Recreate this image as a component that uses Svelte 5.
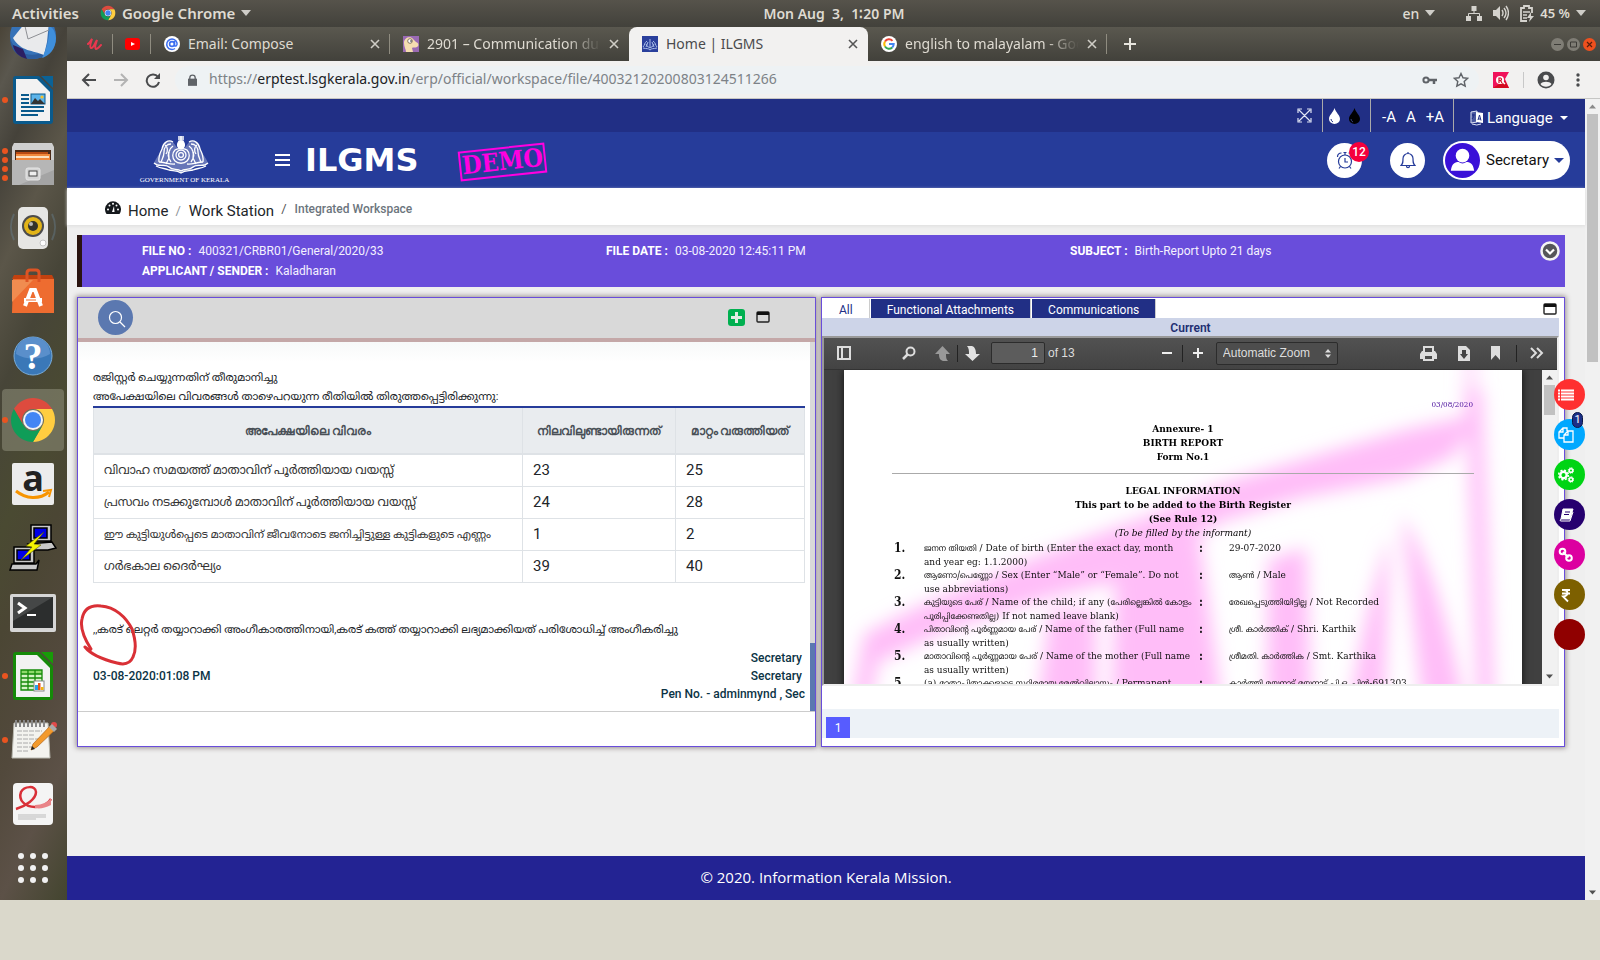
<script>
  const pinned = ['udemy', 'youtube'];
  const tabs = [
    { icon: 'mail', title: 'Email: Compose', active: false },
    { icon: 'lama', title: '2901 – Communication du', active: false, fade: true },
    { icon: 'kerala', title: 'Home | ILGMS', active: true },
    { icon: 'google', title: 'english to malayalam - Goo', active: false, fade: true }
  ];
  const dock = [
    { id: 'thunderbird', dots: 0 },
    { id: 'writer', dots: 1 },
    { id: 'files', dots: 4 },
    { id: 'speaker', dots: 0 },
    { id: 'software', dots: 0 },
    { id: 'help', dots: 0 },
    { id: 'chrome', dots: 1, active: true },
    { id: 'amazon', dots: 0 },
    { id: 'putty', dots: 0 },
    { id: 'terminal', dots: 0 },
    { id: 'calc', dots: 1 },
    { id: 'notes', dots: 1 },
    { id: 'pdf', dots: 0 },
    { id: 'grid', dots: 0 }
  ];
  const changes = [
    ['വിവാഹ സമയത്ത് മാതാവിന് പൂർത്തിയായ വയസ്സ്', 23, 25],
    ['പ്രസവം നടക്കുമ്പോൾ മാതാവിന് പൂർത്തിയായ വയസ്സ്', 24, 28],
    ['ഈ കുട്ടിയുൾപ്പെടെ മാതാവിന് ജീവനോടെ ജനിച്ചിട്ടുള്ള കുട്ടികളുടെ എണ്ണം', 1, 2],
    ['ഗർഭകാല ദൈർഘ്യം', 39, 40]
  ];
  const items = [
    { n: '1.', ml: 'ജനന തിയതി', en: ' / Date of birth (Enter the exact day, month', rest: 'and year eg: 1.1.2000)', vml: '', v: '29-07-2020' },
    { n: '2.', ml: 'ആണോ/പെണ്ണോ', en: ' / Sex (Enter “Male” or “Female”. Do not', rest: 'use abbreviations)', vml: 'ആൺ', v: ' / Male' },
    { n: '3.', ml: 'കുട്ടിയുടെ പേര്', en: ' / Name of the child; if any (', ml2: 'പേരില്ലെങ്കിൽ കോളം', ml3: 'പൂരിപ്പിക്കേണ്ടതില്ല', rest: ') If not named leave blank)', vml: 'രേഖപ്പെടുത്തിയിട്ടില്ല', v: ' / Not Recorded' },
    { n: '4.', ml: 'പിതാവിന്റെ പൂർണ്ണമായ പേര്', en: ' / Name of the father (Full name', rest: 'as usually written)', vml: 'ശ്രീ. കാർത്തിക്', v: ' / Shri. Karthik' },
    { n: '5.', ml: 'മാതാവിന്റെ പൂർണ്ണമായ പേര്', en: ' / Name of the mother (Full name', rest: 'as usually written)', vml: 'ശ്രീമതി. കാർത്തിക', v: ' / Smt. Karthika' },
    { n: '5.', pre: '(a) ', ml: 'മാതാപിതാക്കളുടെ സ്ഥിരമായ മേൽവിലാസം', en: ' / Permanent', rest: '', vml: 'കാർത്തി മയ്യനാട് മയ്യനാട് പി.ഒ, പിൻ', v: '-691303' }
  ];
  const floats = [
    { id: 'list', color: '#ff3030' },
    { id: 'copy', color: '#00a8ff', badge: 1 },
    { id: 'gears', color: '#00d414' },
    { id: 'book', color: '#26006f' },
    { id: 'link', color: '#dc00a0' },
    { id: 'rupee', color: '#7d6000' },
    { id: 'blank', color: '#900000' }
  ];
</script>

{#snippet chromeLogo()}
  <path fill="#dd4b3e" d="M24 13H43.05A22 22 0 0 0 4.95 13L14.47 29.5A11 11 0 0 1 24 13z" />
  <path fill="#ffcd40" d="M43.05 13A22 22 0 0 1 24 46L33.53 29.5A11 11 0 0 0 24 13z" />
  <path fill="#0f9d58" d="M24 46A22 22 0 0 1 4.95 13L14.47 29.5A11 11 0 0 0 33.53 29.5z" />
  <circle cx="24" cy="24" r="10" fill="#f4f4f4" />
  <circle cx="24" cy="24" r="8" fill="#4285f4" />
{/snippet}

{#snippet emblem()}
  <path d="M20 7c-5-3-10 1-11 7-2 4-6 9-8 14 5 5 11 2 15 5s8 2 12 5c4-3 8-2 12-5s10 0 15-5c-2-5-6-10-8-14-1-6-6-10-11-7l-5 7h-6z" fill="#fff" opacity=".3" />
  <g fill="none" stroke="#fff" stroke-width="1.3">
    <path d="M28 1v5M25 2h6M25 4h6M26 6c-2 3-2 5 0 7h4c2-2 2-4 0-7z" fill="#fff" />
    <circle cx="28" cy="20" r="5" /><circle cx="28" cy="20" r="2.4" />
    <path d="M22 15c-3 3-3 8 0 11 3 3 9 3 12 0 3-3 3-8 0-11-3-2-9-2-12 0z" />
    <path d="M20 7c-5-3-10 1-11 7-2 4-4 8-3 13M18 9c-4 0-7 3-7 8s-2 7-3 10M20 11c-4 3-5 7-4 12l-3 6M17 15c-3 3-2 8 1 12M12 10c3 2 3 6 1 9" />
    <path d="M36 7c5-3 10 1 11 7 2 4 4 8 3 13M38 9c4 0 7 3 7 8s2 7 3 10M36 11c4 3 5 7 4 12l3 6M39 15c3 3 2 8-1 12M44 10c-3 2-3 6-1 9" />
    <path d="M1 28c5 5 11 0 15 4s8 1 12 4c4-3 8 0 12-4s10 1 15-4M3 31c6 3 9 2 13 4 4 1 8 0 12 3 4-3 8-2 12-3 4-2 7-1 13-4M6 27c6 0 11 3 16 2M50 27c-6 0-11 3-16 2" />
  </g>
{/snippet}

{#snippet closeX(color)}
  <svg width="10" height="10" viewBox="0 0 10 10" aria-hidden="true"><path d="M1 1l8 8M9 1L1 9" stroke={color} stroke-width="1.6" /></svg>
{/snippet}

{#snippet favicon(id)}
  <svg width="16" height="16" viewBox="0 0 16 16" aria-hidden="true">
    {#if id === 'udemy'}
      <path d="M2 8c2-1 3-4 4-5-1 3-3 8-1 9s4-5 6-8c-1 3-3 8-1 9 2 0 4-3 5-4" fill="none" stroke="#e8384f" stroke-width="2" stroke-linecap="round" />
    {:else if id === 'youtube'}
      <rect x="1" y="2" width="15" height="12" rx="3" fill="#f00" /><path d="M7 6l4 2-4 2z" fill="#fff" />
    {:else if id === 'mail'}
      <circle cx="8" cy="8" r="8" fill="#fff" /><circle cx="8" cy="8" r="2.4" fill="none" stroke="#3c6ef0" stroke-width="1.6" />
      <path d="M10.500 5v4.500c1 1.500 3 0 2.500-2.500A5.200 5.200 0 1 0 11 12.500" fill="none" stroke="#3c6ef0" stroke-width="1.500" />
    {:else if id === 'lama'}
      <rect width="16" height="16" fill="#9a6ab4" /><path d="M3 16c0-3-2-5-2-9 0-6 7-7 9-4l3 3c3 1 3 4 1 5-2 1-4 0-5 1l1 4z" fill="#f5ddb0" /><circle cx="7" cy="5" r="2.300" fill="#fff" stroke="#5a4636" stroke-width=".7" /><circle cx="8" cy="5" r=".8" fill="#222" />
    {:else if id === 'kerala'}
      <rect width="16" height="16" fill="#2a3f9c" /><path d="M8 3v9M5 5c-3 2-2 4-4 6M11 5c3 2 2 4 4 6M4 8c1 3 3 3 4 4 1-1 3-1 4-4M1 12c4 1 5 0 7 2 2-2 3-1 7-2M6 6l-2 5M10 6l2 5" fill="none" stroke="#a9bee8" stroke-width="1" />
    {:else}
      <circle cx="8" cy="8" r="8" fill="#fff" />
      <g fill="none" stroke-width="2"><path d="M11.500 4.800A4.700 4.700 0 0 0 4 5.500" stroke="#ea4335" /><path d="M4 5.500a4.700 4.700 0 0 0 0 5" stroke="#fbbc05" /><path d="M4 10.500a4.700 4.700 0 0 0 7.200.900" stroke="#34a853" /><path d="M8 8h4.700c0 1.500-.5 2.500-1.500 3.400" stroke="#4285f4" /></g>
    {/if}
  </svg>
{/snippet}

{#snippet dockIcon(id)}
  <svg width="48" height="48" viewBox="0 0 48 48" aria-hidden="true">
    {#if id === 'thunderbird'}
      <circle cx="24" cy="24" r="23" fill="#3572b8" /><path d="M1 26c0 12 9 21 22 21 14 0 24-9 24-22-3 8-8 11-12 15C22 46 6 42 1 26z" fill="#2b5d9f" />
      <path d="M4 33l10 4 4 10C10 45 5 40 4 33z" fill="#2b1f63" />
      <path d="M4 26L20 6l20 4-2 20-3 13C24 38 12 40 4 26z" fill="#e9eaec" /><path d="M15 10l4 17 21-9" fill="none" stroke="#8d8f94" />
      <path d="M33 46c7-2 14-9 14-20-1-8-4-11-7-12 1 8-1 20-7 32z" fill="#3f8fdc" />
    {:else if id === 'writer' || id === 'calc'}
      <path d="M7 0h23l14 14v31a3 3 0 0 1-3 3H7a3 3 0 0 1-3-3V3a3 3 0 0 1 3-3z" fill={id === 'writer' ? '#0a5a8c' : '#158a08'} />
      <path d="M7 3h21l13 13v29H7z" fill="#f2f2f2" /><path d="M32 0h12v12z" fill={id === 'writer' ? '#0b6296' : '#189b08'} />
      {#if id === 'writer'}
        <g stroke="#0a5a8c" stroke-width="2"><path d="M12 19h8M12 23h8M12 27h8M12 31h23M12 35h23M12 39h17" /></g>
        <rect x="22" y="18" width="14" height="10" fill="#5cb4ea" stroke="#0a5a8c" /><path d="M22 28l4-6 3 3 2-2 5 5z" fill="#333" /><circle cx="33" cy="21" r="1.600" fill="#f5c02c" />
      {:else}
        <rect x="12" y="18" width="21" height="20" fill="#d8f3c8" /><path d="M12 18h21v4H12z" fill="#8fd96c" />
        <path d="M12 18h21v20H12zM12 22h21M12 26h21M12 30h21M12 34h21M19 18v20M26 18v20" fill="none" stroke="#158a08" stroke-width="1.300" />
        <rect x="25" y="29" width="10" height="10" fill="#fff" stroke="#888" /><path d="M26 33h3v5h-3z" fill="#2a9fe8" /><path d="M29 31h2.500v7H29z" fill="#e8541c" /><path d="M32 35h2.500v3H32z" fill="#f3b40c" />
      {/if}
    {:else if id === 'files'}
      <path d="M5 3h38l2 4v16H3V7z" fill="#cfcfcf" /><path d="M6 10h36v13H6z" fill="#4a2a18" /><path d="M7 12h32v9H7z" fill="#b84a12" /><path d="M7 14h34v7H7z" fill="#f0883c" /><path d="M7 16h33v2H7z" fill="#fbe0c0" />
      <path d="M3 20h42v25H3z" fill="#a4a4a4" /><path d="M3 20h42v10L10 45H3z" fill="#b6b6b6" /><rect x="17" y="28" width="14" height="12" rx="2" fill="#d4d4d4" stroke="#e6e6e6" /><rect x="20" y="31" width="8" height="5" fill="#eee" stroke="#444" />
    {:else if id === 'speaker'}
      <path d="M5 10c-4 8-4 18 0 26M43 10c4 8 4 18 0 26" fill="none" stroke="#6d8ba3" stroke-width="2" opacity=".35" />
      <rect x="9" y="3" width="30" height="42" rx="5" fill="#e6e6e4" /><circle cx="24" cy="22" r="11" fill="#4c4c4c" /><circle cx="24" cy="22" r="9" fill="#e2b418" /><circle cx="24" cy="22" r="5" fill="#33322a" /><circle cx="22" cy="20" r="2" fill="#b9b9b9" /><circle cx="34" cy="39" r="3" fill="#fff" stroke="#c4c4c4" />
    {:else if id === 'software'}
      <path d="M4 11h41v34H3z" fill="#ee6c30" /><path d="M3 11l2-4h38l2 4z" fill="#c2410f" /><path d="M3 12h21L3 34z" fill="#f08c50" /><path d="M18 14V5q0-3 3-3h6q3 0 3 3v9" fill="none" stroke="#dd5424" stroke-width="3" />
      <path d="M16 38l6-16h4l6 16" fill="none" stroke="#fff" stroke-width="4" /><path d="M15 32h18" stroke="#fff" stroke-width="4" /><path d="M17 32h10" stroke="#ee6c30" />
    {:else if id === 'help'}
      <circle cx="24" cy="24" r="19" fill="#3a78b8" stroke="#7aaedb" /><path d="M7 22a17 17 0 0 1 34 0c-10 6-24 6-34 0z" fill="#5a8fcb" /><text x="24" y="37" text-anchor="middle" font-family="Liberation Serif" font-weight="700" font-size="38" fill="#fff">?</text>
    {:else if id === 'chrome'}
      {@render chromeLogo()}
    {:else if id === 'amazon'}
      <rect x="3" y="3" width="42" height="42" rx="2" fill="#ececec" /><text x="24" y="31" text-anchor="middle" font-family="Open Sans" font-weight="700" font-size="36" fill="#222">a</text>
      <path d="M7 31c10 8 23 9 33 1" fill="none" stroke="#f79400" stroke-width="3" /><path d="M34 31l8-1-2 7" fill="none" stroke="#f79400" stroke-width="2" />
    {:else if id === 'putty'}
      <g stroke="#000" stroke-width="1.500"><path d="M22 1h20v16H22zM19 20l24-2 4 6-8 2H24z" fill="#c8c8c8" /><path d="M25 4h13v10H25z" fill="#0000e8" /><path d="M5 23h20v16H5zM3 40h24l3-4-2 10H1z" fill="#c8c8c8" /><path d="M8 26h13v10H8z" fill="#0000e8" /></g>
      <path d="M35 8L17 22l6 1-11 13 20-15-7-1z" fill="#f4f400" stroke="#555500" stroke-width=".6" />
    {:else if id === 'terminal'}
      <rect x="1" y="6" width="46" height="38" rx="2" fill="#d6d6d6" /><rect x="4" y="9" width="40" height="31" fill="#2c2e2e" /><path d="M4 9h40L4 33z" fill="#454747" /><path d="M9 15l7 5-7 5" fill="none" stroke="#fff" stroke-width="3" /><path d="M18 27h9" stroke="#fff" stroke-width="2" />
    {:else if id === 'notes'}
      <path d="M5 7h34l2 35H3z" fill="#f3f3ef" stroke="#b9b9b0" /><path d="M7 4v7M11 4v7M15 4v7M19 4v7M23 4v7M27 4v7M31 4v7M35 4v7" stroke="#888" stroke-width="2" /><path d="M8 15h25M8 19h18M8 23h23M8 27h14M8 31h18M8 35h12" stroke="#aaa" stroke-dasharray="5 1" />
      <path d="M22 34l2-6L42 9l5 4-19 18z" fill="#f39a2c" stroke="#b2651a" stroke-width=".7" /><path d="M22 34l1-4 3 3z" fill="#222" /><circle cx="45" cy="9" r="3" fill="#e24a4a" /><path d="M40 11l3-3 5 5-3 3z" fill="#aaa" />
    {:else if id === 'pdf'}
      <rect x="4" y="3" width="40" height="42" rx="4" fill="#f4f4f4" /><path d="M7 29c10-3 20-10 20-17 0-7-12-6-15 0-3 8 4 15 14 15 7 0 13-3 16-8" fill="none" stroke="#d93038" stroke-width="2.500" /><path d="M26 25c7 0 13-3 16-7v7c-6 3-11 4-16 3z" fill="#e98488" /><path d="M9 35h28M9 37h28M9 39h18" stroke="#bbb" />
    {:else}
      {#each [12, 24, 36] as y}{#each [12, 24, 36] as x}<circle cx={x} cy={y} r="3" fill="#f1f1f1" />{/each}{/each}
    {/if}
  </svg>
{/snippet}

{#snippet windowIcon()}
  <svg width="14" height="12" viewBox="0 0 14 12" aria-hidden="true"><rect x="1" y="1" width="12" height="10" rx="1" fill="none" stroke="#222" stroke-width="1.400" /><path d="M1 1h12v3H1z" fill="#111" /></svg>
{/snippet}

{#snippet caret(color)}
  <svg width="10" height="6" viewBox="0 0 10 6" aria-hidden="true"><path d="M0 0h10L5 6z" fill={color} /></svg>
{/snippet}

{#snippet arrow(dir, color)}
  <svg width="15" height="15" viewBox="0 0 15 15" aria-hidden="true"><path d={dir === 'up' ? 'M4 9.500h7l-3.500-4z' : 'M4 5.500h7l-3.500 4z'} fill={color} /></svg>
{/snippet}

<div class="desktop">
  <header class="topbar">
    <div class="top-left">
      <button class="plain">Activities</button>
      <button class="plain app">
        <svg width="16" height="16" viewBox="0 0 48 48" aria-hidden="true">{@render chromeLogo()}</svg>
        Google Chrome {@render caret('#cfcdc8')}
      </button>
    </div>
    <div class="clock">Mon Aug&nbsp; 3,&nbsp; 1∶20 PM</div>
    <div class="top-right">
      <button class="plain lang">en {@render caret('#cfcdc8')}</button>
      <svg width="16" height="16" viewBox="0 0 16 16" aria-hidden="true"><path d="M5.500 1h5v5h-5zM0 11h5v5H0zM11 11h5v5h-5z" fill="#d5d3ce" /><path d="M8 5v4M2.500 11V8.500h11V11" fill="none" stroke="#d5d3ce" /></svg>
      <svg width="16" height="16" viewBox="0 0 16 16" aria-hidden="true"><path d="M0 5h3l4-4v14l-4-4H0z" fill="#d5d3ce" /><path d="M9 5q2 3 0 6M11 3q4 5 0 10M13 1q5 7 0 14" fill="none" stroke="#d5d3ce" stroke-width="1.400" /></svg>
      <button class="plain battery">
        <svg width="14" height="17" viewBox="0 0 14 17" aria-hidden="true"><path d="M7 16H1V3h3V1h5v2h3v5" fill="none" stroke="#d5d3ce" stroke-width="1.800" /><path d="M3 7h7M3 10h4M3 13h4" stroke="#d5d3ce" stroke-width="1.400" /><path d="M11 7l-4 6h3l-1 4 5-6h-3z" fill="#d5d3ce" /></svg>
        45 % {@render caret('#cfcdc8')}
      </button>
    </div>
  </header>

  <div class="body">
    <nav class="dock" aria-label="Dock">
      {#each dock as d, i}
        <button class="slot" class:first={i === 0} class:focused={d.active} aria-label={d.id}>
          <span class="dots">{#each Array(d.dots) as _}<i></i>{/each}</span>
          {@render dockIcon(d.id)}
        </button>
      {/each}
    </nav>

    <div class="window">
      <div class="tabstrip">
        {#each pinned as p}
          <button class="tab pin" aria-label={p}>{@render favicon(p)}</button>
        {/each}
        {#each tabs as t}
          <div class="tab" class:active={t.active}>
            {@render favicon(t.icon)}
            <span class="title" class:fade={t.fade}>{t.title}</span>
            <button class="plain" aria-label="Close tab">{@render closeX(t.active ? '#555' : '#cfcdc6')}</button>
          </div>
        {/each}
        <button class="plain newtab" aria-label="New tab"><svg width="14" height="14" viewBox="0 0 14 14"><path d="M7 1v12M1 7h12" stroke="#e6e4dd" stroke-width="2" /></svg></button>
        <div class="winbtns">
          <svg width="13" height="13" viewBox="0 0 13 13"><circle cx="6.500" cy="6.500" r="6.500" fill="#7f7d75" /><path d="M3 6.500h7" stroke="#3c3b37" /></svg>
          <svg width="13" height="13" viewBox="0 0 13 13"><circle cx="6.500" cy="6.500" r="6.500" fill="#7f7d75" /><path d="M3.500 4h6v5h-6z" fill="none" stroke="#3c3b37" /></svg>
          <svg width="13" height="13" viewBox="0 0 13 13"><circle cx="6.500" cy="6.500" r="6.500" fill="#f0501e" /><path d="M4 4l5 5M9 4L4 9" stroke="#5a1e0c" stroke-width="1.200" /></svg>
        </div>
      </div>

      <div class="toolbar">
        <button class="plain" aria-label="Back"><svg width="16" height="16" viewBox="0 0 16 16"><path d="M15 8H2M8 2L2 8l6 6" fill="none" stroke="#4a4b4d" stroke-width="2" /></svg></button>
        <button class="plain" aria-label="Forward"><svg width="16" height="16" viewBox="0 0 16 16"><path d="M1 8h13M8 2l6 6-6 6" fill="none" stroke="#b3b3b3" stroke-width="2" /></svg></button>
        <button class="plain" aria-label="Reload"><svg width="16" height="16" viewBox="0 0 16 16"><path d="M13 5a6.200 6.200 0 1 0 1 5" fill="none" stroke="#4a4b4d" stroke-width="2" /><path d="M15 1v6H9z" fill="#4a4b4d" /></svg></button>
        <div class="omnibox">
          <svg width="9" height="12" viewBox="0 0 10 13" aria-hidden="true"><path d="M0 5h10v8H0z" fill="#5f6368" /><path d="M2 6V4a3 3 0 0 1 6 0v2" fill="none" stroke="#5f6368" stroke-width="1.500" /></svg>
          <span class="url">https://<b>erptest.lsgkerala.gov.in</b>/erp/official/workspace/file/40032120200803124511266</span>
          <svg width="15" height="10" viewBox="0 0 15 10" aria-hidden="true"><circle cx="4" cy="5" r="2.600" fill="none" stroke="#5f6368" stroke-width="2" /><path d="M7 5h8M12 5v4" stroke="#5f6368" stroke-width="2.500" /></svg>
          <svg width="16" height="16" viewBox="0 0 16 16" aria-hidden="true"><path d="M8 1.500l2 4.300 4.600.500-3.400 3.200 1 4.700L8 11.800l-4.200 2.400 1-4.700L1.400 6.300 6 5.800z" fill="none" stroke="#5f6368" stroke-width="1.400" /></svg>
        </div>
        <svg width="16" height="16" viewBox="0 0 16 16" aria-hidden="true"><path d="M0 0h16l-4 7 4 9H0z" fill="#f0125a" /><path d="M0 16l9-6 3-1 4 7z" fill="#d40a20" /><circle cx="7" cy="8" r="4" fill="#fff" /><path d="M9 9l3 3" stroke="#fff" stroke-width="1.500" /><path d="M6 11V6h1.500a1.300 1.300 0 0 1 0 2.500H6M7.500 8.500L9 11" fill="none" stroke="#d40a20" stroke-width="1.200" /></svg>
        <span class="vline"></span>
        <svg width="18" height="18" viewBox="0 0 18 18" aria-hidden="true"><circle cx="9" cy="9" r="8.500" fill="#4a4b4d" /><circle cx="9" cy="6.500" r="2.800" fill="#f2f1f0" /><path d="M3.500 13c2-3 9-3 11 0-2 3.500-9 3.500-11 0z" fill="#f2f1f0" /></svg>
        <button class="plain kebab" aria-label="Menu"><svg width="4" height="16" viewBox="0 0 4 16"><g fill="#4a4b4d"><circle cx="2" cy="3" r="1.700" /><circle cx="2" cy="8" r="1.700" /><circle cx="2" cy="13" r="1.700" /></g></svg></button>
      </div>

      <div class="viewport">
        <div class="page">
          <div class="utility">
            <button class="plain full" aria-label="Full screen"><svg width="15" height="15" viewBox="0 0 15 15"><path d="M2 2l11 11M13 2L2 13M1 5V1h4M10 1h4v4M14 10v4h-4M5 14H1v-4" fill="none" stroke="#dfe4f4" stroke-width="1.200" /></svg></button>
            <div class="ucell drops">
              <svg width="11" height="16" viewBox="0 0 11 16"><path d="M5.500 0C7 5 11 7 11 11a5.500 5 0 0 1-11 0C0 7 4 5 5.500 0z" fill="#fff" /><path d="M2 11q0 2 2 3" fill="none" stroke="#212f85" /></svg>
              <svg width="11" height="16" viewBox="0 0 11 16"><path d="M5.500 0C7 5 11 7 11 11a5.500 5 0 0 1-11 0C0 7 4 5 5.500 0z" fill="#000" /><path d="M2 11q0 2 2 3" fill="none" stroke="#39427a" /></svg>
            </div>
            <div class="ucell sizes"><button class="plain">-A</button><button class="plain">A</button><button class="plain">+A</button></div>
            <button class="plain ucell language">
              <svg width="14" height="16" viewBox="0 0 14 16" aria-hidden="true"><path d="M1 2l6-1v11l-6 1z" fill="#4a589f" stroke="#dfe4f4" /><path d="M6 2l7 1v10l-7-1z" fill="#fff" /><path d="M8 10l1.500-5L11 10.500M8.500 9h2M2 5h3M3 4q1 4-1 5" fill="none" stroke="#212f85" /><path d="M2 14q5 2 9 0" fill="none" stroke="#dfe4f4" /></svg>
              Language <svg class="lc" width="8" height="4" viewBox="0 0 8 4"><path d="M0 0h8L4 4z" fill="#fff" /></svg>
            </button>
          </div>

          <div class="masthead">
            <div class="crest">
              <svg width="56" height="40" viewBox="0 0 56 40" aria-hidden="true">{@render emblem()}</svg>
              <span>GOVERNMENT OF KERALA</span>
            </div>
            <button class="plain burger" aria-label="Toggle menu"><svg width="15" height="12" viewBox="0 0 15 12"><path d="M0 1h15M0 6h15M0 11h15" stroke="#fff" stroke-width="2" /></svg></button>
            <span class="brand">ILGMS</span>
            <span class="demo">DEMO</span>
            <div class="mast-right">
              <button class="round" aria-label="Alarms">
                <svg width="18" height="19" viewBox="0 0 18 19"><g fill="none" stroke="#263c9a" stroke-width="1.200"><circle cx="9" cy="10.500" r="6.500" /><path d="M9 7v4h3M9 4V2M7.500 1.500h3M4.500 15.500L3 17.500M13.500 15.500l1.500 2M1.500 6q0-4 4-4M16.500 6q0-4-4-4" /></g></svg>
                <span class="badge">12</span>
              </button>
              <button class="round" aria-label="Notifications">
                <svg width="16" height="18" viewBox="0 0 16 18"><path d="M1 14.500c2-2 2-3 2-7a5 5 0 0 1 10 0c0 4 0 5 2 7zM8 2.500V1M6.500 15a1.500 1.700 0 0 0 3 0" fill="none" stroke="#263c9a" stroke-width="1.200" /></svg>
              </button>
              <button class="user">
                <svg width="35" height="35" viewBox="0 0 36 36" aria-hidden="true"><circle cx="18" cy="18" r="18" fill="#3a10d8" /><circle cx="18" cy="13" r="7" fill="#fff" /><path d="M6 28.500c1-8 5-9 8-9q4 3 8 0c3 0 7 1 8 9z" fill="#fff" /></svg>
                Secretary <svg width="10" height="5" viewBox="0 0 10 5" aria-hidden="true"><path d="M0 0h10L5 5z" fill="#263c9a" /></svg>
              </button>
            </div>
          </div>

          <nav class="crumbs" aria-label="Breadcrumb">
            <svg width="16" height="13" viewBox="0 0 16 13" aria-hidden="true"><path d="M1.500 13A8 8 0 1 1 14.500 13z" fill="#15191d" /><g fill="#fff"><circle cx="3" cy="8.500" r="1" /><circle cx="4.500" cy="4.500" r="1" /><circle cx="8" cy="2.800" r="1" /><circle cx="11.500" cy="4.500" r="1" /><circle cx="13" cy="8.500" r="1" /><path d="M7 11l2-6 .5 6z" /></g></svg>
            <a href="#home">Home</a><span class="sep">/</span><a href="#work">Work Station</a><span class="sep dark">/</span><span class="here">Integrated Workspace</span>
          </nav>

          <main class="content">
            <section class="filebar">
              <dl>
                <div><dt>FILE NO :</dt><dd>400321/CRBR01/General/2020/33</dd></div>
                <div><dt>FILE DATE :</dt><dd>03-08-2020 12:45:11 PM</dd></div>
                <div><dt>SUBJECT :</dt><dd>Birth-Report Upto 21 days</dd></div>
                <div><dt>APPLICANT / SENDER :</dt><dd>Kaladharan</dd></div>
              </dl>
              <button class="plain" aria-label="Expand"><svg width="20" height="20" viewBox="0 0 20 20"><circle cx="10" cy="10" r="8.500" fill="#55555a" stroke="#f4f4f4" stroke-width="2.500" /><path d="M6 8.500l4 4 4-4" fill="none" stroke="#fff" stroke-width="2.200" /></svg></button>
            </section>

            <div class="panels">
              <section class="panel">
                <div class="panel-head">
                  <button class="search" aria-label="Search"><svg width="18" height="18" viewBox="0 0 18 18"><circle cx="7.500" cy="7.500" r="6" fill="none" stroke="#fff" stroke-width="1.200" /><path d="M12 12l5 5" stroke="#fff" stroke-width="1.200" /></svg></button>
                  <div class="head-tools">
                    <button class="plain" aria-label="Add"><svg width="17" height="17" viewBox="0 0 17 17"><rect width="17" height="17" rx="3" fill="#00b050" /><path d="M8.500 3v11M3 8.500h11" stroke="#e4ece4" stroke-width="3" /></svg></button>
                    <button class="plain" aria-label="Maximise">{@render windowIcon()}</button>
                  </div>
                </div>
                <div class="note-wrap">
                  <div class="note">
                    <p class="ml">രജിസ്റ്റർ ചെയ്യുന്നതിന് തീരുമാനിച്ചു<br />അപേക്ഷയിലെ വിവരങ്ങൾ താഴെപറയുന്ന രീതിയിൽ തിരുത്തപ്പെട്ടിരിക്കുന്നു:</p>
                    <table>
                      <colgroup><col /><col class="c2" /><col class="c3" /></colgroup>
                      <thead><tr><th>അപേക്ഷയിലെ വിവരം</th><th>നിലവിലുണ്ടായിരുന്നത്</th><th>മാറ്റം വരുത്തിയത്</th></tr></thead>
                      <tbody>
                        {#each changes as [label, before, after]}
                          <tr><td class="ml" class:long={label.length > 60}>{label}</td><td>{before}</td><td>{after}</td></tr>
                        {/each}
                      </tbody>
                    </table>
                    <div class="remark">
                      <p class="ml">,,കരട് ലെറ്റർ തയ്യാറാക്കി അംഗീകാരത്തിനായി,കരട് കത്ത് തയ്യാറാക്കി ലഭ്യമാക്കിയത് പരിശോധിച്ച് അംഗീകരിച്ചു</p>
                      <svg class="mark" width="62" height="64" viewBox="0 0 62 64" aria-hidden="true"><path d="M12 47C5 36 1 25 3 17 5 6 13 3 22 4c14 1 25 11 31 23 4 12 4 22 1 28-3 7-9 8-16 6-12-3-25-7-32-16l5 4" fill="none" stroke="#d93036" stroke-width="3" stroke-linecap="round" stroke-linejoin="round" /></svg>
                    </div>
                    <div class="sign">
                      <span></span><span class="in">Secretary</span>
                      <span>03-08-2020:01:08 PM</span><span class="in">Secretary</span>
                      <span></span><span>Pen No. - adminmynd , Sec</span>
                    </div>
                  </div>
                  <div class="thinbar"><span></span></div>
                </div>
              </section>

              <section class="panel docs">
                <div class="doc-tabs">
                  <button class="on">All</button><button>Functional Attachments</button><button>Communications</button>
                  <button class="plain max" aria-label="Maximise">{@render windowIcon()}</button>
                </div>
                <div class="caption">Current</div>
                <div class="viewer">
                  <div class="pdfbar">
                    <button class="plain" aria-label="Sidebar"><svg width="14" height="14" viewBox="0 0 14 14"><path d="M1 1h12v12H1zM5 1v12" fill="none" stroke="#ddd" stroke-width="2" /></svg></button>
                    <button class="plain find" aria-label="Find"><svg width="14" height="14" viewBox="0 0 14 14"><circle cx="8.500" cy="5.500" r="4" fill="none" stroke="#ddd" stroke-width="2" /><path d="M5.500 8.500L1 13" stroke="#ddd" stroke-width="2.500" /></svg></button>
                    <button class="plain up" aria-label="Previous page"><svg width="15" height="15" viewBox="0 0 15 15"><path d="M7.500 0L15 8h-4c0 3 0 5 2 7H8c-3-1-4-3-4-7H0z" fill="#999" /></svg></button>
                    <i class="split"></i>
                    <button class="plain down" aria-label="Next page"><svg width="15" height="15" viewBox="0 0 15 15"><path d="M7.500 15L15 8h-4c0-4-1-7-4-8H2c2 2 2 5 2 8H0z" fill="#e2e2e2" /></svg></button>
                    <input type="text" value="1" aria-label="Page" /><span class="of">of 13</span>
                    <span class="grow"></span>
                    <button class="plain" aria-label="Zoom out"><svg width="12" height="12" viewBox="0 0 12 12"><path d="M1 6h10" stroke="#eee" stroke-width="2" /></svg></button>
                    <i class="split zoomsplit"></i>
                    <button class="plain" aria-label="Zoom in"><svg width="12" height="12" viewBox="0 0 12 12"><path d="M1 6h10M6 1v10" stroke="#eee" stroke-width="2" /></svg></button>
                    <span class="pick"><select aria-label="Zoom"><option>Automatic Zoom</option></select><svg width="6" height="9" viewBox="0 0 6 9" aria-hidden="true"><path d="M0 3.500L3 0l3 3.500zM0 5.500L3 9l3-3.500z" fill="#ddd" /></svg></span>
                    <span class="grow"></span>
                    <div class="pdf-right">
                      <button class="plain" aria-label="Print"><svg width="17" height="15" viewBox="0 0 17 15"><path d="M3 5V0h11v5h1l2 3v5h-3v2H3v-2H0V8l2-3z" fill="#ddd" /><path d="M5 2h7v4H5zM5 10h7v3H5z" fill="#4b4b4b" /></svg></button>
                      <button class="plain" aria-label="Download"><svg width="12" height="15" viewBox="0 0 12 15"><path d="M0 0h8l4 4v11H0z" fill="#ddd" /><path d="M4 4h4v4h2l-4 5-4-5h2z" fill="#444" /></svg></button>
                      <button class="plain" aria-label="Bookmark"><svg width="9" height="14" viewBox="0 0 9 14"><path d="M0 0h9v14L4.500 9 0 14z" fill="#ddd" /></svg></button>
                      <i class="split"></i>
                      <button class="plain" aria-label="More tools"><svg width="14" height="12" viewBox="0 0 14 12"><path d="M1 1l5 5-5 5M7 1l5 5-5 5" fill="none" stroke="#ddd" stroke-width="2" /></svg></button>
                    </div>
                  </div>
                  <div class="pdfarea">
                    <article class="sheet">
                      <svg class="stamp" viewBox="0 0 678 314" preserveAspectRatio="none" aria-hidden="true">
                        <defs><filter id="soft" x="-10%" y="-10%" width="120%" height="120%"><feGaussianBlur stdDeviation="9" /></filter></defs>
                        <g fill="#ffbdf8" filter="url(#soft)">
                          <path d="M622 20l16 0 12 314h-16z" /><path d="M620-20h14v60h-14z" opacity=".5" />
                          <path d="M634 44L560 60 456 90 376 114 304 146 204 182 71 238 20 264 8 334H26L34 292 100 262 204 228 304 204 376 152 456 128 560 108 610 86z" />
                          <path d="M206 240h46v94h-58z" />
                          <path d="M272 186l84-16 22 164H268z" />
                          <path d="M424 190l38-12 5 156h-44z" />
                          <path d="M546 165q-22 60-40 169h34z" />
                          <path d="M558 145q38 60 62 189h-42z" />
                        </g>
                      </svg>
                      <div class="date">03/08/2020</div>
                      <h2>Annexure- 1<br />BIRTH REPORT<br />Form No.1</h2>
                      <hr />
                      <h3>LEGAL INFORMATION<br />This part to be added to the Birth Register<br />(See Rule 12)<br /><em>(To be filled by the informant)</em></h3>
                      <ol>
                        {#each items as it}
                          <li>
                            <b>{it.n}</b>
                            <span>{it.pre ?? ''}<i class="m">{it.ml}</i>{it.en}<i class="m">{it.ml2 ?? ''}</i><br /><i class="m">{it.ml3 ?? ''}</i>{it.rest}</span>
                            <b class="colon">:</b>
                            <span><i class="m">{it.vml}</i>{it.v}</span>
                          </li>
                        {/each}
                      </ol>
                    </article>
                    <div class="pdfscroll">{@render arrow('up', '#505050')}<span></span>{@render arrow('down', '#505050')}</div>
                  </div>
                </div>
                <div class="pager"><button>1</button></div>
              </section>
            </div>
          </main>

          <footer>© 2020. Information Kerala Mission.</footer>
          <div class="floats">
            {#each floats as f}
              <button aria-label={f.id} style="background:{f.color}">
                <svg width="16" height="16" viewBox="0 0 16 16" fill="none" stroke="#fff">
                  {#if f.id === 'list'}<path d="M0 3.500h2M3 3.500h13M0 6.500h2M3 6.500h13M0 9.500h2M3 9.500h13M0 12.500h2M3 12.500h13" stroke-width="2" />
                  {:else if f.id === 'copy'}<path d="M6 11H1V5l4-4h4v3M5 1v4H1M6 15V8l4-4h5v11zM10 4v4H6" stroke-width="1.300" />
                  {:else if f.id === 'gears'}<circle cx="5.500" cy="8" r="3.200" stroke-width="2.400" /><circle cx="5.500" cy="8" r="4.800" stroke-width="1.600" stroke-dasharray="2 1.770" /><circle cx="13" cy="3.500" r="1.800" stroke-width="1.600" /><circle cx="13" cy="12.500" r="1.800" stroke-width="1.600" /><circle cx="13" cy="3.500" r="2.800" stroke-dasharray="1.200 1" /><circle cx="13" cy="12.500" r="2.800" stroke-dasharray="1.200 1" />
                  {:else if f.id === 'book'}<path d="M5 2h10l-3 10H3z" fill="#fff" /><path d="M3 12q-2 2 0 2h9l3-9" /><path d="M7 5h5M6 7.500h5" stroke="#26006f" />
                  {:else if f.id === 'link'}<circle cx="4.500" cy="4.500" r="2.800" stroke-width="2" /><circle cx="11" cy="11" r="2.800" stroke-width="2" /><path d="M5 5l5.500 5.500" stroke-width="2" />
                  {:else if f.id === 'rupee'}<path d="M4 3h8M4 6.500h8M5 3c6 0 6 6 0 6.500L10 14.500" stroke-width="1.800" />{/if}
                </svg>
                {#if f.badge}<span>{f.badge}</span>{/if}
              </button>
            {/each}
          </div>
        </div>
        <div class="scrollbar">{@render arrow('up', '#8a8a8a')}<span></span>{@render arrow('down', '#505050')}</div>
      </div>
    </div>
  </div>
</div>

<style>
  :global(body) { margin: 0; background: #dad8cb; }
  .desktop, .desktop :is(div, span, button, section, header, nav, dl, dd, dt, table, th, td, footer, input, select, ol, li, article) { box-sizing: border-box; }
  .desktop { display: flex; flex-direction: column; min-height: 100vh; padding-bottom: 60px; background: #dad8cb; font-family: Roboto, "Noto Sans", sans-serif; overflow: hidden; }
  .desktop svg { display: block; flex: none; }
  button { font: inherit; cursor: pointer; }
  .plain { border: 0; padding: 0; background: none; color: inherit; display: flex; align-items: center; }
  .topbar { height: 27px; display: grid; grid-template-columns: 1fr auto 1fr; align-items: center; padding: 0 14px 1px 12px; background: linear-gradient(#56534b, #42413b); color: #dfdbd2; font: 600 14px "Noto Sans", sans-serif; }
  .top-left { display: flex; gap: 21px; font-size: 15px; }
  .app { gap: 6px; }
  .clock { padding-left: 70px; }
  .top-right { display: flex; justify-content: flex-end; align-items: center; gap: 11px; }
  .lang { gap: 6px; margin-right: 20px; font-weight: 500; }
  .battery { gap: 6px; font-size: 13px; }
  .body { flex: 1; display: flex; }
  .dock { width: 67px; flex: none; background: linear-gradient(115deg, #4a4438 0, #5a574e 6%, #45423a 14%, #5b5649 24%, #474538 36%, #4a4a32 50%, #4b4634 60%, #52493c 74%, #5c5147 86%, #43452f 100%); }
  .slot { position: relative; width: 67px; height: 64px; border: 0; padding: 0 0 0 9px; background: none; display: flex; align-items: center; }
  .slot.first { height: 41px; align-items: flex-end; padding-bottom: 8px; overflow: hidden; }
  .slot.focused::before { content: ""; position: absolute; inset: 1px 3px 1px 2px; border-radius: 4px; background: rgba(150, 150, 130, .5); }
  .slot > :global(svg), .dots { position: relative; }
  .dots { width: 0; display: flex; flex-direction: column; gap: 3px; }
  .dots i { width: 6px; height: 6px; margin-left: -7px; border-radius: 50%; background: #e95420; }
  .window { flex: 1; min-width: 0; display: flex; flex-direction: column; }
  .tabstrip { height: 34px; display: flex; align-items: center; padding: 0 4px 0 8px; background: linear-gradient(#5a584f, #42413b); color: #dfdbd2; font: 14px "Noto Sans", sans-serif; }
  .tab { flex: 0 1 239px; height: 34px; display: flex; align-items: center; gap: 8px; padding: 0 10px 0 13px; position: relative; min-width: 0; }
  .tab::after { content: ""; position: absolute; right: 0; top: 7px; width: 1px; height: 20px; background: #8f8c80; }
  .pin { flex: 0 0 38px; border: 0; background: none; padding: 0; justify-content: center; }
  .active { background: #f2f1f0; color: #4a4b4d; border-radius: 8px 8px 0 0; }
  .active::after, .tab:has(+ .active)::after { display: none; }
  .title { flex: 1; min-width: 0; overflow: hidden; white-space: nowrap; padding-bottom: 2px; }
  .fade { mask-image: linear-gradient(90deg, #000 80%, transparent); }
  .newtab { margin-left: 16px; }
  .winbtns { margin-left: auto; display: flex; gap: 3px; }
  .toolbar { height: 38px; display: flex; align-items: center; gap: 16px; padding: 0 20px 0 14px; background: #f2f1f0; border-bottom: 1px solid #c6c6c4; }
  .omnibox { flex: 1; height: 28px; display: flex; align-items: center; gap: 16px; margin: 0 -2px; padding: 0 10px 0 13px; border-radius: 14px; background: #eef2f4; color: #7d8287; font: 14px "Noto Sans", sans-serif; }
  .omnibox .url { flex: 1; margin-left: -4px; white-space: nowrap; padding-bottom: 2px; }
  .url b { font-weight: 400; color: #202124; }
  .vline { width: 1px; height: 16px; margin: 0 -3px 0 -2px; background: #c8c8c8; }
  .kebab { margin-left: 5px; }
  .viewport { flex: 1; display: flex; }
  .page { flex: 1; min-width: 0; display: flex; flex-direction: column; background: #efefef; position: relative; }
  .scrollbar { width: 15px; display: flex; flex-direction: column; background: #f1f1f1; }
  .scrollbar span { flex: 0 0 248px; margin: 0 2px; background: #c1c1c1; }
  .scrollbar :global(svg:last-child), .pdfscroll :global(svg:last-child) { margin-top: auto; }

  .utility { height: 33px; display: flex; justify-content: flex-end; align-items: stretch; background: #212f85; color: #fff; font-size: 15px; }
  .full { margin-right: 10px; }
  .ucell { border-left: 1px solid #aaa; display: flex; align-items: center; }
  .drops { width: 48px; padding-left: 6px; gap: 9px; }
  .sizes { width: 83px; padding-left: 11px; gap: 10px; padding-top: 3px; }
  .language { width: 132px; padding: 4px 0 0 16px; gap: 3px; border: 0; border-left: 1px solid #aaa; }
  .lc { margin-left: 4px; }
  .masthead { height: 56px; display: flex; align-items: center; background: #263c9a; color: #fff; padding: 0 15px 0 70px; }
  .crest { display: flex; flex-direction: column; align-items: center; width: 95px; font: 7px/10px "Liberation Serif", serif; white-space: nowrap; }
  .crest svg { margin-right: 8px; }
  .burger { margin-left: 43px; }
  .brand { width: 154px; margin-left: 15px; font: 700 32px "DejaVu Sans", sans-serif; }
  .demo { padding: 0 1px; border: 2px solid #ff00e0; color: #ff00e0; font: 700 25px/26px "DejaVu Serif Condensed", "DejaVu Serif", serif; transform: rotate(-6deg); margin-top: 4px; }
  .mast-right { margin-left: auto; display: flex; align-items: center; gap: 28px; }
  .round { position: relative; width: 35px; height: 35px; border: 0; border-radius: 50%; background: #fff; padding: 0; display: grid; place-items: center; }
  .badge { position: absolute; top: -1px; right: -7px; width: 20px; height: 20px; border-radius: 50%; background: #f5003c; color: #fff; font-size: 12px; line-height: 20px; font-weight: 500; }
  .user { display: flex; align-items: center; gap: 5px; margin-left: -10px; height: 39px; padding: 0 6px 0 2px; border: 0; border-radius: 20px; background: #fff; color: #111; font-size: 15px; }
  .user svg:first-child { margin-right: 1px; }
  .crumbs { height: 37px; display: flex; align-items: center; padding: 8px 0 0 38px; background: #fff; box-shadow: 0 1px 3px #ddd; font-size: 15px; }
  .crumbs > svg { margin: -6px 7px 0 0; }
  .crumbs a { color: #212529; text-decoration: none; }
  .sep { color: #8b9096; font-size: 13px; margin: 0 8px 0 7px; }
  .sep.dark { color: #555; margin: -4px 8px 0 7px; }
  .here { font-size: 12px; font-weight: 500; color: #6c757d; margin-top: -4px; }
  .content { flex: 1; padding: 10px 20px 0 10px; }
  .filebar { display: flex; align-items: flex-start; padding: 6px 5px 6px 60px; border-left: 5px solid #2a1410; background: #694ddb; color: #f4f1ff; font-size: 12px; line-height: 20px; }
  dl { flex: 1; display: grid; grid-template-columns: repeat(3, 464px); margin: 0; }
  dl div { display: flex; gap: 7px; white-space: nowrap; }
  dt { font-weight: 700; color: #fff; } dd { margin: 0; }
  .panels { display: grid; grid-template-columns: 739fr 744fr; gap: 5px; margin-top: 10px; }
  .panel { height: 450px; min-width: 0; border: 1px solid #694ddb; background: #fff; box-shadow: 0 0 5px 1px #988f8f; }
  .panel-head { height: 44px; display: flex; align-items: center; justify-content: space-between; padding: 0 45px 2px 20px; background: #d9d9d9; border-bottom: 4px solid #c4a8a8; }
  .search { width: 35px; height: 35px; border: 0; border-radius: 50%; background: #5b78b0; padding: 3px 0 0 2px; display: grid; place-items: center; }
  .head-tools { display: flex; gap: 11px; }
  .note-wrap { display: flex; border-bottom: 1px solid #ccc; height: 370px; background: linear-gradient(#f7f9f9, #fff 20px); }
  .note { flex: 1; padding: 26px 5px 0 15px; min-width: 0; }
  .thinbar { width: 5px; background: #d9d9d9; display: flex; align-items: flex-end; }
  .thinbar span { width: 5px; height: 68px; background: #5b78b0; }
  p { margin: 0; }
  .ml { font: 11px/19px Roboto, "Noto Sans Malayalam", sans-serif; color: #212529; white-space: nowrap; }
  .note table { width: 100%; table-layout: fixed; border-collapse: collapse; border-top: 2px solid #263c9a; color: #212529; font-size: 15px; }
  .c2 { width: 153px; } .c3 { width: 129px; }
  th { height: 47px; padding: 0; border: 1px solid #dee2e6; border-top: 2px solid #263c9a; border-bottom-width: 2px; background: #e9ecef; color: #495057; font: 700 12px Roboto, sans-serif; white-space: nowrap; }
  td { height: 32px; padding: 0 10px; border: 1px solid #dee2e6; white-space: nowrap; }
  td.ml { color: #333; font-size: 12px; }
  td.long { font-size: 11px; }
  .remark { position: relative; padding-top: 37px; }
  .mark { position: absolute; left: -14px; top: 19px; }
  .sign { display: grid; grid-template-columns: 1fr auto; margin-top: 10px; font-size: 12px; line-height: 18px; font-weight: 500; color: #0b3345; }
  .sign span:nth-child(even) { text-align: right; }
  .sign .in { padding-right: 3px; }

  .docs { display: flex; flex-direction: column; font-size: 12px; }
  .doc-tabs { height: 20px; display: flex; gap: 1px; padding: 1px 7px 0 1px; }
  .doc-tabs button:not(.plain) { border: 0; padding: 2px 16px 0; background: #212f85; color: #fff; border-right: 1px solid #ccc; }
  .doc-tabs button.on { background: #fff; color: #212f85; }
  .max { margin-left: auto; }
  .caption { height: 18px; margin-right: 5px; background: #cdd4e8; color: #212f72; font-weight: 600; line-height: 20px; text-align: center; }
  .viewer { margin-right: 5px; border: 2px solid #eee; border-top-color: #999; border-left-color: #999; display: flex; flex-direction: column; height: 350px; }
  .pdfbar { height: 32px; flex: none; display: flex; align-items: center; padding: 0 13px 1px; background: linear-gradient(#525252, #434343); border-bottom: 1px solid #333; color: #ddd; font-family: "Liberation Sans", sans-serif; }
  .find { margin-left: 51px; } .up { margin-left: 19px; } .down { margin-left: 7px; }
  .split { width: 1px; height: 17px; background: #222; margin-left: 7px; }
  .pdfbar input { width: 54px; height: 22px; margin-left: 11px; padding: 0 6px; border: 1px solid #2c2c2c; border-radius: 2px; background: #5c5c5c; color: #eee; font: 12px "Liberation Sans", sans-serif; text-align: right; }
  .of { margin-left: 3px; }
  .grow { flex: 1; }
  .of + .grow { min-width: 86px; }
  .zoomsplit { margin: 0 9px; }
  .pick { position: relative; margin-left: 12px; }
  .pick svg { position: absolute; right: 7px; top: 7px; }
  select { appearance: none; width: 122px; height: 23px; padding: 0 6px; border: 1px solid #2c2c2c; border-radius: 2px; background: #4d4d4d; color: #ddd; font: 12px "Liberation Sans", sans-serif; }
  .pdf-right { display: flex; align-items: center; gap: 21px; }
  .pdf-right .split { margin: 0 -8px 0 -5px; }
  .pdfarea { flex: 1; min-height: 0; display: flex; background: #404040; overflow: hidden; }
  .sheet { position: relative; flex: 1; margin: 0 20px; background: #fff; box-shadow: 0 0 8px #111; overflow: hidden; font: 10px/13px "DejaVu Serif Condensed", "DejaVu Serif", serif; color: #111; height: 400px; padding: 28px 48px 0; }
  .sheet > :not(svg) { position: relative; }
  .stamp { position: absolute; left: 0; top: 0; width: 100%; height: 314px; }
  .date { text-align: right; color: #4b0f9c; font-size: 8px; padding-right: 1px; }
  h2, h3 { margin: 0; text-align: center; font-size: 10px; font-weight: 700; line-height: 14px; color: #000; }
  h2 { padding-top: 11px; }
  hr { margin: 9px 0 10px; border: 0; border-top: 1px solid #aaa; }
  em { font-weight: 400; }
  ol { list-style: none; margin: 1px 0 0; padding: 0; }
  li { display: grid; grid-template-columns: 32px 1fr 30px 245px; height: 27px; white-space: nowrap; }
  li b { font-size: 12px; padding-left: 2px; line-height: 15px; }
  li .colon { padding-left: 0; }
  .m { font: 8px/12px "Noto Sans Malayalam", sans-serif; }
  .pdfscroll { width: 15px; flex: none; display: flex; flex-direction: column; background: #f1f1f1; }
  .pdfscroll span { height: 30px; margin: 0 2px; background: #c1c1c1; }
  .pager { height: 29px; margin: 23px 5px 0 0; padding: 8px 0 0 4px; background: #edf2f7; }
  .pager button { display: block; width: 24px; height: 21px; border: 0; padding: 0; background: #575cff; color: #fff; font-size: 12px; }
  footer { height: 44px; display: grid; place-items: center; background: #232393; color: #fff; font: 15px "Open Sans", sans-serif; padding-bottom: 2px; }
  .floats { position: absolute; right: 0; top: 280px; display: flex; flex-direction: column; gap: 9px; }
  .floats button { position: relative; width: 31px; height: 31px; border: 0; border-radius: 50%; padding: 0 0 0 4px; display: flex; align-items: center; }
  .floats button > span { position: absolute; top: -7px; right: 2px; width: 11px; height: 16px; border-radius: 6px; background: #1c2f87; border: 1px solid #0a1746; color: #fff; font-size: 11px; line-height: 14px; }
</style>
